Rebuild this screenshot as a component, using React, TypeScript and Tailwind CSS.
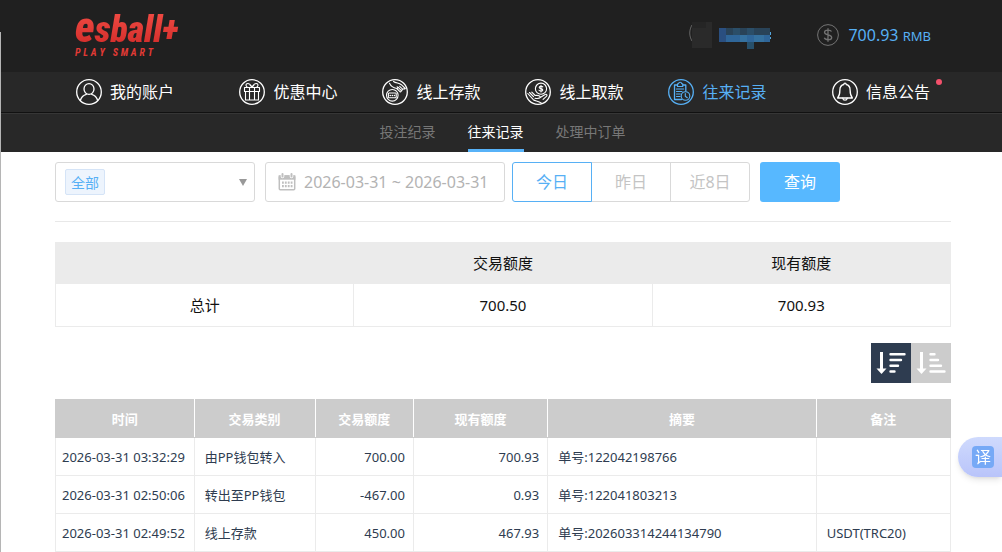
import { useState, type ReactNode } from 'react'
import clsx from 'clsx'

const navItems = [
  { label: '我的账户', icon: <AccountIcon /> },
  { label: '优惠中心', icon: <GiftIcon /> },
  { label: '线上存款', icon: <DepositIcon /> },
  { label: '线上取款', icon: <WithdrawIcon /> },
  { label: '往来记录', icon: <RecordIcon />, active: true },
  { label: '信息公告', icon: <BellIcon />, dot: true },
]

const subItems = ['投注纪录', '往来记录', '处理中订单']
const ranges = ['今日', '昨日', '近8日']

const records = [
  { time: '2026-03-31 03:32:29', type: '由PP钱包转入', amount: '700.00', balance: '700.93', summary: '单号:122042198766', note: '' },
  { time: '2026-03-31 02:50:06', type: '转出至PP钱包', amount: '-467.00', balance: '0.93', summary: '单号:122041803213', note: '' },
  { time: '2026-03-31 02:49:52', type: '线上存款', amount: '450.00', balance: '467.93', summary: '单号:202603314244134790', note: 'USDT(TRC20)' },
]

function RoundIcon({ children }: { children: ReactNode }) {
  return (
    <svg viewBox="0 0 26 26" className="size-[26px] shrink-0" fill="none" stroke="currentColor" strokeWidth="1.1" strokeLinecap="round" strokeLinejoin="round" aria-hidden="true">
      <circle cx="13" cy="13" r="12.3" strokeWidth="1.3" />
      {children}
    </svg>
  )
}

function AccountIcon() {
  return (
    <RoundIcon>
      <ellipse cx="13" cy="10" rx="5" ry="5.4" strokeWidth="1.3" />
      <path d="M4.3 21.5c1-3.6 3.6-5.6 6-6.2M21.7 21.5c-1-3.6-3.6-5.6-6-6.2" strokeWidth="1.3" />
    </RoundIcon>
  )
}

function GiftIcon() {
  return (
    <RoundIcon>
      <path d="M5.5 8.5h15v4h-15zM6.5 12.5h13v8.5h-13zM10.5 8.5v12.5M15.5 8.5v12.5" />
      <path d="M13 8.3C12 5.5 9.5 3.8 7.8 4.8c-1.4.9-.6 2.7.5 3.5M13 8.3c1-2.8 3.5-4.500 5.200-3.500 1.400.9.600 2.700-.500 3.500M13 8.300l-2-2.500M13 8.300l2-2.500" />
    </RoundIcon>
  )
}

function DepositIcon() {
  return (
    <RoundIcon>
      <circle cx="10.3" cy="16.3" r="5.8" />
      <path d="M7 14h6.6M7 18.7h6.6M6.4 14.5v3.7M14.2 14.5v3.7" />
      <path d="M8.2 16.4h.1M10.3 16.4h.1M12.4 16.4h.1" strokeWidth="1.5" />
      <path d="M7.500 4.300c1.500 3.400 4 4.600 7.200 5.200l3.300 3.200M11.500 2.500c2.500 1.800 5.500 1.400 7.800 3.200l4 3.800M14.500 9.500c1.300.4 1.600-1 .6-1.700M18 12.700c1.300.5 1.700-.8.9-1.600l-2.600-2.700M18.900 11.100c1.300.5 2-.6 1.200-1.500l-2.400-2.200M20.100 9.600c1.200.8 2.300 0 2.800.4" />
    </RoundIcon>
  )
}

function WithdrawIcon() {
  return (
    <RoundIcon>
      <circle cx="16" cy="9.7" r="5.6" />
      <path d="M17.800 7.900c-.5-.8-3.600-1-3.600.5 0 1.600 3.600.9 3.600 2.600 0 1.500-3.100 1.400-3.800.3M16 6.400v6.600" />
      <path d="M2.800 14.500l5.500 6.200c2 1.400 4.800 1.200 8.200 3.500M4.500 13.500l4 4.200M6.800 13.200l3.400 3.300c2.500-.3 4.500 0 5.300 1.500M10 19.200c2.200.6 4.600.1 6-1.200l4.200-2.500c1.600-.7 2.400.8 1.200 1.800l-3.300 3" />
    </RoundIcon>
  )
}

function RecordIcon() {
  return (
    <RoundIcon>
      <path d="M9.500 6H6.500v14.500h7M14.800 6h3v6" strokeWidth="1.3" />
      <path d="M9.500 4.800h1c.3-2 3-2 3.300 0h1v2.700H9.500z" />
      <path d="M8.500 10h7.200M8.500 12.500h5.500M8.500 15h3.800M8.500 17.500h3.600" />
      <circle cx="17.5" cy="17" r="4.3" />
      <path d="M17.300 14.500v2.800l2 1.400" />
    </RoundIcon>
  )
}

function BellIcon() {
  return (
    <RoundIcon>
      <path d="M13 4.200c-.8 0-1.200.6-1.200 1.300C8.900 6.200 7.900 8.600 7.900 11c0 4.800-.9 6.400-2.300 8h14.800c-1.400-1.600-2.300-3.200-2.300-8 0-2.400-1-4.800-3.900-5.500 0-.7-.4-1.300-1.200-1.300z" strokeWidth="1.3" />
      <path d="M10.800 19.200c.3 2.600 4.100 2.600 4.400 0" strokeWidth="1.3" />
    </RoundIcon>
  )
}

function CalendarIcon() {
  return (
    <svg viewBox="0 0 18 18" className="size-[18px] shrink-0 text-[#bfbfbf]" aria-hidden="true">
      <rect x="1.3" y="3" width="15.4" height="13.7" rx="1" fill="none" stroke="currentColor" strokeWidth="1.5" />
      <path d="M.6 2.300h16.800v4.400H.6z" fill="currentColor" />
      <path d="M4.500 0v3.500M13.500 0v3.500" stroke="#fff" strokeWidth="3.600" strokeLinecap="round" />
      <path d="M4.500 1v2.500M13.500 1v2.500" stroke="currentColor" strokeWidth="2" strokeLinecap="round" />
      <path d="M4 9.700h10.500M4 13.200h10.500" stroke="currentColor" strokeWidth="2.200" strokeDasharray="1.800 1.100" />
    </svg>
  )
}

function SortIcon({ desc }: { desc?: boolean }) {
  return (
    <svg viewBox="0 0 40 40" className="size-10" fill="none" stroke="#fff" aria-hidden="true">
      <path d="M10.500 9v18" strokeWidth="3" />
      <path d="M5.500 25.500h10l-5 5.500z" fill="#fff" stroke="none" />
      <path
        d={desc ? 'M19.500 11.300h14M19.500 17h10.500M19.500 22.700h7.500M19.500 28.500h4' : 'M19.500 11.300h4M19.500 17h7.500M19.500 22.700h10.500M19.500 28.500h14'}
        strokeWidth="2.4"
        strokeLinecap="round"
      />
    </svg>
  )
}

function MaskedUser() {
  return (
    <svg viewBox="2 -1 86 30" className="h-[30px] w-[86px]" role="img" aria-label="user">
      <path d="M6 4c-3 5-3 11 0 16" fill="none" stroke="#666" />
      <path d="M6 1h20v26H6z" fill="#2a2a2a" />
      <path d="M6 1h14v6H6z" fill="#252525" />
      <path d="M33 7h51v7H33z" fill="#294358" />
      <path d="M33 7h7v14h-7z" fill="#2a4f80" />
      <path d="M47 7h7v7h-7zM61 7h7v7h-7z" fill="#2b4e68" />
      <path d="M40 14h44v7H40z" fill="#2f6699" />
      <path d="M54 14h7v7h-7zM68 14h10v7H68z" fill="#35719f" />
      <path d="M61 21h7v7h-7z" fill="#27506b" />
      <path d="M84.500 11v3M84.500 16v2" stroke="#55a6dc" />
    </svg>
  )
}

function Header() {
  return (
    <header className="bg-[#202020]">
      <div className="mx-auto flex h-[72px] max-w-[900px] items-center justify-between pr-5 pb-0.5 pl-6">
        <a href="#" className="flex flex-col gap-0.5 text-[#e23a35] italic">
          <span className="bg-gradient-to-b from-[#f04a43] to-[#d32c2a] bg-clip-text pr-1 font-['Roboto_Condensed',Roboto,sans-serif] text-4xl leading-8 font-black text-transparent">
            <span className="text-[42px] leading-8">e</span>sball+
          </span>
          <span className="flex w-[78px] justify-between font-['Roboto_Condensed',Roboto,sans-serif] text-[10px] leading-[10px] font-bold">
            {'PLAY SMART'.split('').map((c, i) => <span key={i} className="whitespace-pre">{c}</span>)}
          </span>
        </a>
        <div className="flex items-center gap-[43px]">
          <MaskedUser />
          <div className="flex items-center gap-[9px] text-[#57b0f5]">
            <svg viewBox="0 0 22 22" className="size-[22px]" fill="none" stroke="#737373" aria-hidden="true">
              <circle cx="11" cy="11" r="10.4" />
              <path d="M14.500 7.500c-1-2-7-2-7 .7 0 3.300 7.200 2 7.200 5.200 0 3-6.400 3-7.400.4M11 4.200v13.600" strokeWidth="1.3" />
            </svg>
            <span className="text-base">700.93 <span className="text-[13px]">RMB</span></span>
          </div>
        </div>
      </div>
      <nav className="border-b border-[#111] bg-[#282828]">
        <ul className="mx-auto grid h-10 max-w-[944px] grid-cols-[184fr_143fr_143fr_143fr_143fr_184fr] pl-1">
          {navItems.map((item) => (
            <li key={item.label} className="flex items-center justify-center">
              <a href="#" className={clsx('relative flex items-center gap-2 text-base whitespace-nowrap', item.active ? 'text-[#57b0f5]' : 'text-white')}>
                {item.icon}
                {item.label}
                {item.dot && <span className="absolute top-0 -right-3 size-1.5 rounded-full bg-[#f4516c]" />}
              </a>
            </li>
          ))}
        </ul>
      </nav>
      <nav className="flex h-[39px] justify-center gap-8 border-t border-[#363636] bg-[#282828] pl-[3px] text-sm">
        {subItems.map((s) => (
          <a
            key={s}
            href="#"
            className={clsx('flex items-center border-b-3', s === '往来记录' ? 'border-[#57b2f8] text-white' : 'border-transparent text-[#777]')}
          >
            {s}
          </a>
        ))}
      </nav>
    </header>
  )
}

function Filters() {
  const [range, setRange] = useState('今日')
  const [dates, setDates] = useState('2026-03-31 ~ 2026-03-31')

  return (
    <form className="flex h-10 text-base" onSubmit={(e) => e.preventDefault()}>
      <label className="mr-2.5 flex w-[200px] items-center justify-between rounded-[3px] border border-[#d9d9d9] pr-[7px] pl-[9px]">
        <select aria-label="交易类别" className="h-[26px] w-10 appearance-none rounded-xs border border-[#d5e4f7] bg-[#edf4fd] px-[5px] pt-0.5 text-sm text-[#57b0f5]">
          <option>全部</option>
        </select>
        <svg viewBox="0 0 8 7" className="h-[7px] w-2" aria-hidden="true"><path d="M0 0h8L4 7z" fill="#999" /></svg>
      </label>
      <label className="mr-[7px] flex w-60 items-center gap-2 rounded-[3px] border border-[#d9d9d9] pl-3">
        <CalendarIcon />
        <input aria-label="日期" value={dates} onChange={(e) => setDates(e.target.value)} className="w-full min-w-0 text-[#b3b3b3] outline-none" />
      </label>
      <div className="mr-2.5 flex">
        {ranges.map((r) => (
          <button
            key={r}
            type="button"
            onClick={() => setRange(r)}
            className={clsx(
              '-mr-px w-20 border first:rounded-l-[3px] last:mr-0 last:rounded-r-[3px]',
              r === range ? 'relative border-[#57b0f5] text-[#57b0f5]' : 'border-[#d9d9d9] text-[#c4c4c4]',
            )}
          >
            {r}
          </button>
        ))}
      </div>
      <button type="submit" className="w-20 rounded-[3px] bg-[#57b8ff] text-white">查询</button>
    </form>
  )
}

export default function App() {
  const [desc, setDesc] = useState(true)

  return (
    <div className="relative bg-white font-['Noto_Sans','Noto_Sans_CJK_SC',sans-serif]">
      <Header />
      <main className="mx-auto max-w-[900px] pt-2.5 pl-1">
        <Filters />
        <hr className="mt-[19px] mb-5 border-[#e8e8e8]" />

        <table className="w-full table-fixed border-collapse text-center text-[15px] leading-5 text-[#111]">
          <thead className="bg-[#ebebeb]">
            <tr className="h-[41px] *:border *:border-[#ebebeb] *:font-normal">
              <th aria-label="项目" />
              <th>交易额度</th>
              <th>现有额度</th>
            </tr>
          </thead>
          <tbody>
            <tr className="h-[43px] *:border *:border-[#ebebeb]">
              <td>总计</td>
              <td>700.50</td>
              <td>700.93</td>
            </tr>
          </tbody>
        </table>

        <div className="my-4 flex justify-end">
          <button type="button" aria-label="降序" onClick={() => setDesc(true)} className={desc ? 'bg-[#2e3c50]' : 'bg-[#ccc]'}><SortIcon desc /></button>
          <button type="button" aria-label="升序" onClick={() => setDesc(false)} className={desc ? 'bg-[#ccc]' : 'bg-[#2e3c50]'}><SortIcon /></button>
        </div>

        <table className="w-full table-fixed border-collapse text-[13px] leading-5 text-[#2e3c50]">
          <colgroup>
            <col className="w-[15.5%]" />
            <col className="w-[13.5%]" />
            <col className="w-[11%]" />
            <col className="w-[15%]" />
            <col className="w-[30%]" />
            <col className="w-[15%]" />
          </colgroup>
          <thead className="bg-[#ccc] text-white">
            <tr className="h-[38px]">
              {['时间', '交易类别', '交易额度', '现有额度', '摘要', '备注'].map((h) => (
                <th key={h} className="border border-x-white border-y-[#ccc] font-bold first:border-l-[#ccc] last:border-r-[#ccc]">{h}</th>
              ))}
            </tr>
          </thead>
          <tbody>
            {records.map((r) => (
              <tr key={r.time} className="h-[38px] *:border *:border-t-0 *:border-[#ebebeb]">
                <td className="pl-1.5 whitespace-nowrap">{r.time}</td>
                <td className="pl-2.5">{r.type}</td>
                <td className="pr-2 text-right">{r.amount}</td>
                <td className="pr-2 text-right">{r.balance}</td>
                <td className="pl-2.5">{r.summary}</td>
                <td className="pl-2.5">{r.note}</td>
              </tr>
            ))}
          </tbody>
        </table>
      </main>

      <div className="absolute top-8 bottom-0 left-0 w-px bg-[#b5b5b5]" />
      <button type="button" aria-label="翻译" className="fixed top-[437px] right-0 flex h-10 w-11 items-center rounded-l-full bg-gradient-to-b from-[#cfdafd] to-[#b9c4fa] pl-3.5 shadow-md">
        <span className="flex size-[22px] items-center justify-center rounded-sm bg-[#76a9f6] text-base leading-none text-white">译</span>
      </button>
    </div>
  )
}
